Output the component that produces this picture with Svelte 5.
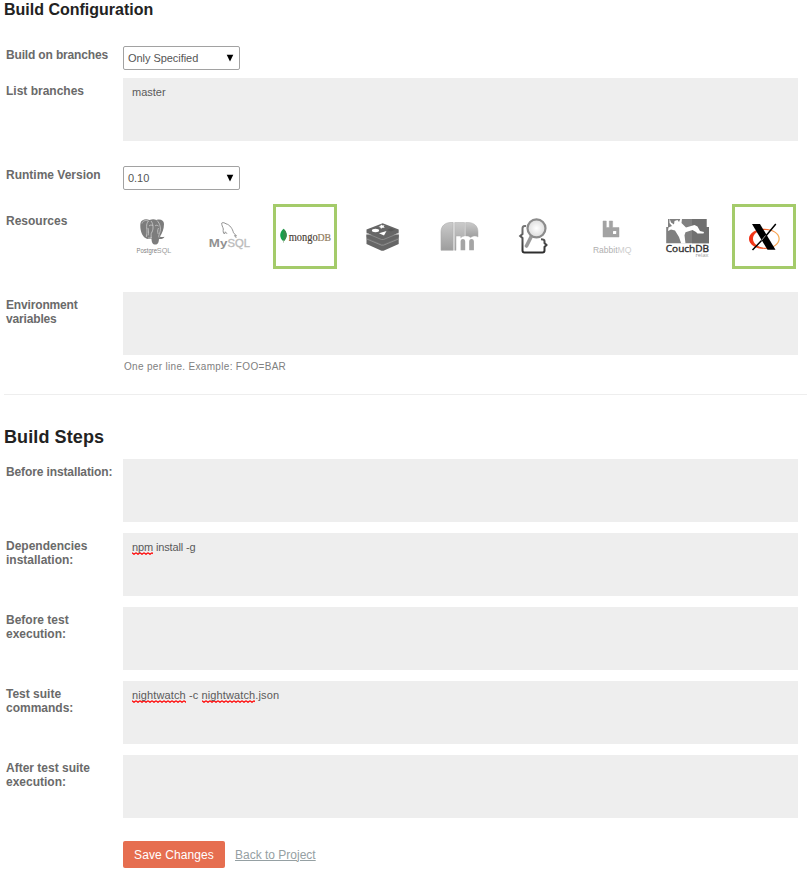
<script>
  const steps = [
    { label: 'Before installation:', ls: -0.12, parts: [] },
    { label: 'Dependencies installation:', ls: 0, text: -0.13, parts: [{ t: 'npm', bad: true }, { t: ' install -g' }] },
    { label: 'Before test execution:', ls: 0, parts: [] },
    {
      label: 'Test suite commands:',
      ls: 0,
      text: 0.12,
      parts: [{ t: 'nightwatch', bad: true }, { t: ' -c ' }, { t: 'nightwatch', bad: true }, { t: '.json' }]
    },
    { label: 'After test suite execution:', ls: 0, parts: [] }
  ];
</script>

{#snippet select(value)}
  <div class="select" role="combobox" aria-expanded="false" aria-controls="none" tabindex="0">
    <span>{value}</span>
    <svg width="8" height="8" viewBox="0 0 8 8"><path d="M0.7 0.8h6.6L4 7.5z" fill="#000" /></svg>
  </div>
{/snippet}

<main>
  <h2 class="first">Build Configuration</h2>

  <div class="row branch">
    <div class="label tight">Build on branches</div>
    {@render select('Only Specified')}
  </div>
  <div class="row list">
    <div class="label">List branches</div>
    <div class="area">master</div>
  </div>
  <div class="row runtime">
    <div class="label">Runtime Version</div>
    {@render select('0.10')}
  </div>

  <div class="row resources">
    <div class="label">Resources</div>
    <div class="tiles">
      <div class="tile">
        <svg viewBox="0 0 64 65">
          <path d="M20.500 19c1-4 6-4.500 9-3 3-1.300 5-1 7 0 4-1.300 7.500.5 7.500 4 0 5-2 9.500-4 12.500 1 .8 3 .5 4.500.2-.5 1.600-3 2.600-5.500 2.300-.3 3-.8 5.500-3.500 5.500-3 0-3.800-2-4-6-2 .8-5 .5-6-.5-3.500-1.500-6-9-5-15z" fill="#7c7c7c" />
          <path d="M22 19.500c.5-3 4-3.500 6.500-2.500-3 3-1.500 8-1.500 11 0 2-1 4-.5 5M31 34c.5-3-.5-4 1-6 1.500-3 1.500-8-1-11M37 16.500c3 3 4.500 8 2.500 13-.8 2-1 3-.5 4M29 22c1.500-1.500 3-1 4 0M35 22c1-1 2-1 3.500 0M28 24c.5 3 1 5 0 7.500M38.500 24c-1 2-1 4-.3 6M32 33c-1 1-2 1.200-4 1" fill="none" stroke="#ccc" stroke-width=".8" />
          <text x="16.500" y="48.600" font-size="6.800" fill="#808080" textLength="20.500" lengthAdjust="spacingAndGlyphs">Postgre</text>
          <text x="36.800" y="48.600" font-size="7.800" fill="#999" textLength="14.500" lengthAdjust="spacingAndGlyphs">SQL</text>
        </svg>
      </div>
      <div class="tile">
        <svg viewBox="0 0 64 65">
          <path d="M27.500 30c-1.500-1-1.500-3-1.200-5-.3-2-2-4-1.500-6 1-1 3 0 4.200.8 4 1 6.500 5 7.500 9 .6 1.200 2.500 2 3 3.200l-2-.4 1.800 2.300M27.500 30l.8-2.200 1.700 2" fill="none" stroke="#8c8c8c" stroke-width=".95" />
          <text x="11.800" y="42.500" font-size="10.500" font-weight="bold" fill="#919191" textLength="18.500" lengthAdjust="spacingAndGlyphs">My</text>
          <text x="30.500" y="42.500" font-size="10.500" fill="#bcbcbc" textLength="22.500" lengthAdjust="spacingAndGlyphs" stroke="#bcbcbc" stroke-width=".35">SQL</text>
        </svg>
      </div>
      <div class="tile selected">
        <svg viewBox="0 0 64 65">
          <path d="M10.500 24.700c4.300 4 4.300 8.500 0 12.800-4.500-4-4.300-9 0-12.800z" fill="#14a04b" />
          <path d="M10.500 24.700c4.300 4 4.300 8.500 0 12.800z" fill="#3a8a4c" />
          <path d="M10.500 36v3" stroke="#a9b8a0" stroke-width=".6" />
          <text class="serif" x="15.700" y="37" font-size="11.500" fill="#473c34" stroke="#473c34" stroke-width=".15" textLength="29" lengthAdjust="spacingAndGlyphs">mongo</text>
          <text class="serif" x="44.500" y="37" font-size="10.500" fill="#8f7a5c" stroke="#8f7a5c" stroke-width=".2" textLength="13.600" lengthAdjust="spacingAndGlyphs">DB</text>
        </svg>
      </div>
      <div class="tile">
        <svg viewBox="0 0 64 65">
          <g fill="#666">
            <path d="M16.500 34.500V40l15 6.700h2L48.700 40v-5.500L33.500 41h-2z" />
            <path d="M16.500 30.500V35l15 6.500h2L48.700 35v-4.500l-15.200 6h-2z" fill="#707070" />
            <path d="M16.500 30.500v3l15 6.500h2l15.200-6.500v-3z" />
            <path d="M16.500 25.500v3.300l15 6.400h2l15.200-6.400v-3.300l-16-6.200z" />
          </g>
          <path d="M16.500 29.300l15 6.200h2l15.200-6.200M16.500 35l15 6.200h2L48.700 35" fill="none" stroke="#a0a0a0" stroke-width=".6" />
          <path d="M31 20.500l1.500 1 2-.3-.8 1.500 1.200 1-2.500.1-1.400 1-.5-1.400-2-.6 1.800-.6zM29 29.200l7.500-2.200-2.500 4.500z" fill="#fff" />
          <ellipse cx="25.500" cy="26.500" rx="3.600" ry="1.700" fill="#fff" />
          <path d="M37 26l4-2 4 1.700-4 1.700z" fill="#585858" />
        </svg>
      </div>
      <div class="tile">
        <svg viewBox="0 0 64 65">
          <defs>
            <linearGradient id="mem" x1="0" y1="0" x2="0" y2="1">
              <stop offset="0" stop-color="#cacaca" />
              <stop offset="1" stop-color="#9d9d9d" />
            </linearGradient>
          </defs>
          <path d="M15 46.300V28c0-6 4-9.500 10-9.500h2.200v27.800z" fill="url(#mem)" stroke="#aaa" stroke-width=".6" />
          <path d="M28.700 18.500h9.800V32c-1.800.2-2.800.8-3.700 1.800V32H30v14.300h-1.300z" fill="url(#mem)" stroke="#aaa" stroke-width=".5" />
          <path d="M39.600 18.500H42c6 0 10 3.500 10 9.500v5c-1.600-1.500-5.500-1.500-7.500.6-1.400-1.500-3-1.800-4.900-1.600z" fill="url(#mem)" stroke="#aaa" stroke-width=".5" />
          <path d="M34.600 46.300v-8.800c0-3.300 4.600-3.300 4.600 0v8.800zM43.200 46.300v-8.800c0-3.300 4.700-3.300 4.700 0v8.800z" fill="#a5a5a5" />
        </svg>
      </div>
      <div class="tile">
        <svg viewBox="0 0 64 65">
          <defs>
            <radialGradient id="lens"><stop offset="0" stop-color="#fff" /><stop offset="1" stop-color="#dcdcdc" /></radialGradient>
            <linearGradient id="brace" x1="0" y1="0" x2="0" y2="1"><stop offset="0" stop-color="#777" /><stop offset="1" stop-color="#2e2e2e" /></linearGradient>
          </defs>
          <path d="M23 22h-1.500c-1.800 0-2 1-2 2.500V30l-2.300 2 2.300 2v12.500c0 1.500.8 2 2 2h18c1.500 0 2-.8 2-2V43l2-2-2-2v-2c0-1.500-1-1.800-3.500-1.800" fill="none" stroke="url(#brace)" stroke-width="2" />
          <path d="M28.500 32l-5 10" stroke="#999" stroke-width="3.600" stroke-linecap="round" />
          <circle cx="33.500" cy="24.300" r="9" fill="url(#lens)" stroke="#8c8c8c" stroke-width="2.200" />
        </svg>
      </div>
      <div class="tile">
        <svg viewBox="0 0 64 65">
          <path d="M24 17h3.300v6.500h3V17h3.300v6.500H40V33H24z" fill="#a3a3a3" stroke="#a3a3a3" stroke-width=".5" stroke-linejoin="round" />
          <rect x="34" y="27" width="3.200" height="3" rx=".6" fill="#fff" />
          <text x="14" y="48.600" font-size="9.500" fill="#b0b0b0" textLength="24.500" lengthAdjust="spacingAndGlyphs">Rabbit</text>
          <text x="38.500" y="48.600" font-size="9.500" fill="#cecece" textLength="14" lengthAdjust="spacingAndGlyphs">MQ</text>
        </svg>
      </div>
      <div class="tile">
        <svg viewBox="0 0 64 65">
          <path d="M12 15h38.500v8H53v16.300H10.200V23H12z" fill="#808080" />
          <path d="M36 15h14.500v8H53v16.300H36z" fill="#707070" />
          <path d="M13.500 14.500l1.500 4 3 2 .5-3.500 3-1 1.500 2 1.500-3.500h1.500l-.5 4.500 4.500 4.500 8.500-2.500 3 1.500 2.500 4.500 4 1-.5 1.500h-6l-1.500-1.500-3.500-2-7 2.300-1 3L29.500 39.500h-4.300L23 33l-4-6.500-4-1-3 1.500.5-3.500 3.500-1.500-2.500-3z" fill="#fff" />
          <text class="sans" x="9.800" y="48.400" font-size="9.700" fill="#333" stroke="#333" stroke-width=".4" textLength="43.200" lengthAdjust="spacingAndGlyphs">CouchDB</text>
          <text class="sans" x="39.500" y="52.800" font-size="5" fill="#999" textLength="13" lengthAdjust="spacingAndGlyphs">relax</text>
        </svg>
      </div>
      <div class="tile selected">
        <svg viewBox="0 0 64 65">
          <defs>
            <linearGradient id="ring"><stop offset="0" stop-color="#f02a12" /><stop offset=".45" stop-color="#f55a28" /><stop offset="1" stop-color="#f9b65a" /></linearGradient>
          </defs>
          <path fill-rule="evenodd" d="M32.500 24.800c8.500 0 15.300 4.400 15.300 10s-6.800 10.200-15.300 10.200S17 40.500 17 34.900s7-10.100 15.500-10.100zM33.500 26c-7 0-12.500 3.800-12.500 8.800s5.500 9 12.500 9 13-4 13-9-6-8.800-13-8.800z" fill="url(#ring)" />
          <path d="M20 20h8l15.500 25.800h-8z" fill="#000" />
          <path d="M43.800 20L33 33M31 35L20.500 46" stroke="#000" stroke-width="1.500" />
          <path d="M33.500 31.500l-4 5" stroke="#999" stroke-width="1" />
        </svg>
      </div>
    </div>
  </div>

  <div class="row env">
    <div class="label tight">Environment variables</div>
    <div class="stack">
      <div class="area"></div>
      <p class="hint">One per line. Example: FOO=BAR</p>
    </div>
  </div>

  <hr />
  <h2 class="second">Build Steps</h2>

  {#each steps as step}
    <div class="row step">
      <div class="label" style:letter-spacing="{step.ls}px">{step.label}</div>
      <div class="area" style:letter-spacing="{step.text ?? 0}px">{#each step.parts as part}<span class:bad={part.bad}>{part.t}</span>{/each}</div>
    </div>
  {/each}

  <div class="actions">
    <button type="button">Save Changes</button>
    <a href="#project">Back to Project</a>
  </div>
</main>

<style>
  :global(body) {
    background: #fff;
  }
  main {
    width: 807px;
    height: 874px;
    overflow: hidden;
    box-sizing: border-box;
    font-family: 'Liberation Sans', Arial, sans-serif;
    font-size: 11px;
    color: #666;
  }
  h2 {
    margin: 0;
    padding-left: 4px;
    color: #222;
    font-weight: bold;
  }
  h2.first {
    font-size: 16px;
    line-height: 18px;
    height: 45px;
    padding-top: 1px;
  }
  h2.second {
    font-size: 18px;
    line-height: 20px;
    height: 32px;
    padding-top: 32px;
    letter-spacing: 0.1px;
  }
  .row {
    display: flex;
    align-items: flex-start;
    padding-right: 9px;
  }
  .label {
    flex: none;
    box-sizing: border-box;
    width: 123px;
    padding: 6px 8px 0 6px;
    font-size: 12px;
    line-height: 14px;
    font-weight: bold;
    letter-spacing: 0;
    color: #6a6a6a;
  }
  .label.tight {
    letter-spacing: -0.16px;
  }
  .branch {
    height: 32px;
  }
  .branch .label {
    padding-top: 2px;
  }
  .list {
    height: 88px;
  }
  .runtime {
    height: 38px;
  }
  .runtime .label {
    padding-top: 2px;
  }
  .resources {
    height: 88px;
    padding-right: 0;
  }
  .resources .label {
    width: 120px;
    padding-top: 10px;
  }
  .env {
    height: 102px;
  }
  .select {
    box-sizing: border-box;
    width: 117px;
    height: 24px;
    border: 1px solid #a2a2a2;
    border-radius: 2px;
    padding: 0 5px 0 4px;
    display: flex;
    align-items: center;
    justify-content: space-between;
    color: #555;
    letter-spacing: -0.05px;
  }
  .select svg {
    display: block;
  }
  .area {
    flex: 1;
    box-sizing: border-box;
    height: 63px;
    padding: 8px 9px;
    background: #eee;
    line-height: 13px;
    color: #5a5a5a;
    white-space: pre;
  }
  .bad {
    padding-bottom: 2px;
    background: url("data:image/svg+xml,%3Csvg xmlns='http://www.w3.org/2000/svg' width='4' height='3'%3E%3Cpath d='M0 .8L2 2.300L4 .8' fill='none' stroke='%23f00' stroke-width='1.200'/%3E%3C/svg%3E") repeat-x left bottom;
  }
  .stack {
    flex: 1;
  }
  .hint {
    margin: 6px 0 0 1px;
    font-size: 10px;
    line-height: 12px;
    letter-spacing: 0.32px;
    color: #808080;
  }
  .tiles {
    display: flex;
    gap: 12.5px;
  }
  .tile {
    position: relative;
    width: 64px;
    height: 65px;
  }
  .tile svg {
    display: block;
    width: 64px;
    height: 65px;
  }
  .tile text {
    font-family: 'Liberation Sans', Arial, sans-serif;
  }
  .tile text.serif {
    font-family: 'Liberation Serif', serif;
  }
  .tile text.sans {
    font-family: 'Open Sans', sans-serif;
  }
  .selected {
    box-shadow: inset 0 0 0 3px #a4cb6a;
  }
  hr {
    margin: 0 0 0 4px;
    border: 0;
    height: 1px;
    background: #eee;
  }
  .step {
    height: 74px;
  }
  .actions {
    display: flex;
    align-items: center;
    padding: 12px 0 0 123px;
    gap: 10px;
    font-size: 12px;
  }
  button {
    width: 102px;
    height: 27px;
    padding: 1px 0 0;
    border: 0;
    border-radius: 2px;
    background: #e66e50;
    color: #fff;
    font: 12px/26px 'Liberation Sans', Arial, sans-serif;
    letter-spacing: 0.1px;
  }
  a {
    color: #95a0a3;
  }
</style>
